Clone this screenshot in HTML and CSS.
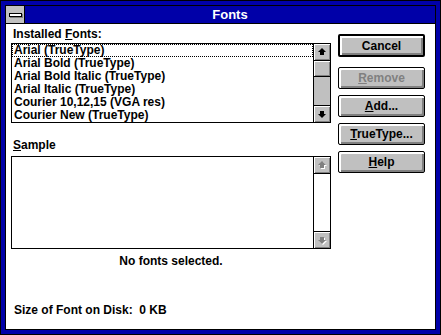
FILE: index.html
```html
<!DOCTYPE html>
<html lang="en">
<head>
  <meta charset="UTF-8" />
  <title>Fonts</title>
  <link rel="stylesheet" href="styles.css">
</head>
<body>

  <div class="window">
    <div class="frame">
      <!-- TITLE BAR -->
      <div class="titlebar">
        <div class="sysmenu"><span class="sysbar"></span></div>
        <div class="title">Fonts</div>
      </div>

      <div class="content">
        <!-- LEFT SIDE -->
        <div class="left">
          <div class="label">Installed <u>F</u>onts:</div>
          <div class="listbox fonts">
            <ul class="items">
              <li class="focus">Arial (TrueType)</li>
              <li>Arial Bold (TrueType)</li>
              <li>Arial Bold Italic (TrueType)</li>
              <li>Arial Italic (TrueType)</li>
              <li>Courier 10,12,15 (VGA res)</li>
              <li>Courier New (TrueType)</li>
            </ul>
            <div class="scrollbar">
              <div class="arrow up">
                <svg width="16" height="16" viewBox="0 0 16 16"><polygon points="8,4 12,8 10,8 10,11 6,11 6,8 4,8" fill="#000"/></svg>
              </div>
              <div class="thumb"></div>
              <div class="track"></div>
              <div class="arrow down">
                <svg width="16" height="16" viewBox="0 0 16 16"><polygon points="8,12 12,8 10,8 10,5 6,5 6,8 4,8" fill="#000"/></svg>
              </div>
            </div>
          </div>

          <div class="label sample-label"><u>S</u>ample</div>
          <div class="listbox sample">
            <div class="items"></div>
            <div class="scrollbar off">
              <div class="arrow up">
                <svg width="16" height="16" viewBox="0 0 16 16"><polygon points="9,5 13,9 11,9 11,12 7,12 7,9 5,9" fill="#fff"/><polygon points="8,4 12,8 10,8 10,11 6,11 6,8 4,8" fill="#808080"/></svg>
              </div>
              <div class="track"></div>
              <div class="arrow down">
                <svg width="16" height="16" viewBox="0 0 16 16"><polygon points="9,13 13,9 11,9 11,6 7,6 7,9 5,9" fill="#fff"/><polygon points="8,12 12,8 10,8 10,5 6,5 6,8 4,8" fill="#808080"/></svg>
              </div>
            </div>
          </div>

          <div class="status">No fonts selected.</div>
          <div class="disk">Size of Font on Disk:&nbsp; 0 KB</div>
        </div>

        <!-- BUTTONS -->
        <div class="buttons">
          <button class="btn default">Cancel</button>
          <button class="btn disabled"><u>R</u>emove</button>
          <button class="btn"><u>A</u>dd...</button>
          <button class="btn"><u>T</u>rueType...</button>
          <button class="btn"><u>H</u>elp</button>
        </div>
      </div>
    </div>
  </div>

</body>
</html>
```

FILE: styles.css
```css
* {
  box-sizing: border-box;
}

body {
  margin: 0;
  background-color: #000;
  font-family: 'Liberation Sans', Arial, sans-serif;
  font-size: 12px;
  font-weight: bold;
  color: #000;
}

u {
  text-decoration: underline;
  text-underline-offset: 1px;
}

.window {
  width: 441px;
  height: 335px;
  border: 1px solid #000;
  padding: 4px;
  background-color: #0000a8;
}

.frame {
  height: 100%;
  border: 1px solid #000;
  background-color: #fff;
}

/* title bar */
.titlebar {
  display: flex;
  height: 18px;
  border-bottom: 1px solid #000;
  background-color: #0000a8;
}

.sysmenu {
  width: 19px;
  height: 17px;
  background-color: #c0c0c0;
  border-right: 1px solid #000;
  display: flex;
  align-items: center;
  justify-content: center;
}

.sysbar {
  width: 13px;
  height: 4px;
  background-color: #fff;
  border: 1px solid #000;
  box-shadow: 1px 1px 0 #808080;
}

.title {
  flex: 1;
  color: #fff;
  text-align: center;
  line-height: 17px;
  font-size: 13px;
}

/* body */
.content {
  display: flex;
  gap: 7px;
  padding-left: 5px;
}

.left {
  width: 320px;
}

.label {
  margin-top: 4px;
  padding-left: 2px;
  line-height: 13px;
}

.sample-label {
  margin-top: 16px;
}

.listbox {
  display: flex;
  border: 1px solid #000;
  margin-top: 2px;
  height: 80px;
}

.listbox.sample {
  margin-top: 4px;
  height: 93px;
}

.items {
  flex: 1;
  list-style: none;
  margin: 0;
  padding: 0;
}

.items li {
  height: 13px;
  line-height: 13px;
  padding-left: 2px;
  white-space: nowrap;
}

.items li.focus {
  outline: 1px dotted #000;
  outline-offset: -1px;
}

.scrollbar {
  width: 17px;
  border-left: 1px solid #000;
  display: flex;
  flex-direction: column;
  background-color: #c0c0c0;
}

.scrollbar.off {
  background-color: #fff;
}

.arrow {
  height: 17px;
  background-color: #c0c0c0;
  box-shadow: inset 1px 1px 0 #fff, inset -1px -1px 0 #808080;
}

.arrow svg {
  display: block;
}

.arrow.up {
  border-bottom: 1px solid #000;
}

.arrow.down {
  border-top: 1px solid #000;
}

.thumb {
  height: 16px;
  border-bottom: 1px solid #000;
  background-color: #c0c0c0;
  box-shadow: inset 1px 1px 0 #fff, inset -1px -1px 0 #808080;
}

.track {
  flex: 1;
}

.status {
  margin-top: 6px;
  text-align: center;
  line-height: 13px;
}

.disk {
  margin-top: 36px;
  padding-left: 3px;
  line-height: 13px;
}

/* buttons */
.buttons {
  display: flex;
  flex-direction: column;
  gap: 6px;
  width: 87px;
  margin-top: 10px;
}

.btn {
  height: 22px;
  padding: 0;
  font-family: inherit;
  font-size: 12px;
  font-weight: bold;
  color: #000;
  background-color: #c0c0c0;
  border: 1px solid #000;
  border-radius: 2px;
  box-shadow: inset 2px 2px 0 #fff, inset -2px -2px 0 #808080;
}

.btn.default {
  height: 23px;
  border-width: 2px;
  margin-bottom: 4px;
}

.btn.disabled {
  color: #808080;
}
```
